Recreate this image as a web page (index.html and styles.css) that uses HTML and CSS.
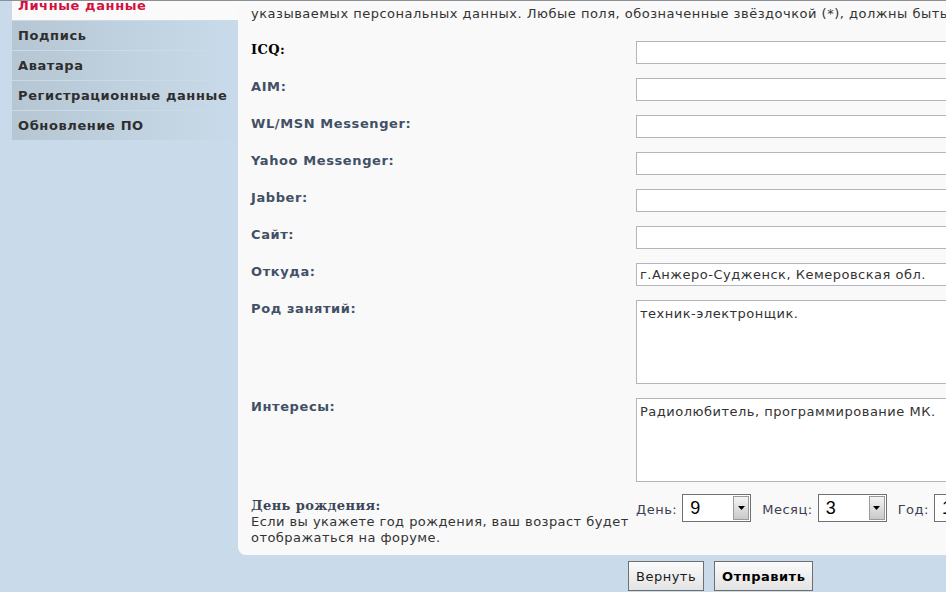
FILE: index.html
```html
<!DOCTYPE html>
<html lang="ru">
<head>
<meta charset="utf-8">
<title>Личные данные</title>
<link rel="stylesheet" href="styles.css">
</head>
<body>
<div class="page">
  <nav class="tabs">
    <div class="tab active"><span class="tab-text">Личные данные</span></div>
    <div class="tab">Подпись</div>
    <div class="tab">Аватара</div>
    <div class="tab">Регистрационные данные</div>
    <div class="tab">Обновление ПО</div>
  </nav>
  <main class="content">
    <section class="panel">
      <p class="intro">указываемых персональных данных. Любые поля, обозначенные звёздочкой (*), должны быть заполнены.</p>
      <div class="form">
        <div class="label serif black">ICQ:</div>
        <div class="field"><input class="text" type="text"></div>

        <div class="label">AIM:</div>
        <div class="field"><input class="text" type="text"></div>

        <div class="label">WL/MSN Messenger:</div>
        <div class="field"><input class="text" type="text"></div>

        <div class="label">Yahoo Messenger:</div>
        <div class="field"><input class="text" type="text"></div>

        <div class="label">Jabber:</div>
        <div class="field"><input class="text" type="text"></div>

        <div class="label">Сайт:</div>
        <div class="field"><input class="text" type="text"></div>

        <div class="label">Откуда:</div>
        <div class="field"><input class="text" type="text" value="г.Анжеро-Судженск, Кемеровская обл."></div>

        <div class="label">Род занятий:</div>
        <div class="field"><textarea class="area">техник-электронщик.</textarea></div>

        <div class="label">Интересы:</div>
        <div class="field"><textarea class="area">Радиолюбитель, программирование МК.</textarea></div>

        <div class="label birth">
          <div class="serif">День рождения:</div>
          <div class="explain">Если вы укажете год рождения, ваш возраст будет отображаться на форуме.</div>
        </div>
        <div class="field dates">
          <span class="date-label">День:</span>
          <div class="select day"><span class="value">9</span><span class="arrow"><svg width="7" height="4" viewBox="0 0 7 4"><path d="M0 0H7L3.5 4Z" fill="#000"/></svg></span></div>
          <span class="date-label">Месяц:</span>
          <div class="select month"><span class="value">3</span><span class="arrow"><svg width="7" height="4" viewBox="0 0 7 4"><path d="M0 0H7L3.5 4Z" fill="#000"/></svg></span></div>
          <span class="date-label">Год:</span>
          <div class="select year"><span class="value">1970</span><span class="arrow"><svg width="7" height="4" viewBox="0 0 7 4"><path d="M0 0H7L3.5 4Z" fill="#000"/></svg></span></div>
        </div>
      </div>
    </section>
    <div class="buttons">
      <button class="btn" type="reset">Вернуть</button>
      <button class="btn primary" type="submit">Отправить</button>
    </div>
  </main>
</div>
</body>
</html>
```

FILE: styles.css
```css
html, body {
  margin: 0;
  padding: 0;
  overflow: hidden;
}

body {
  background: #c9dbea;
  border-top: 1px solid #8e9194;
  font-family: "DejaVu Sans", Verdana, sans-serif;
  font-size: 13px;
  letter-spacing: 0.5px;
  color: #333;
}

.page {
  display: flex;
  align-items: flex-start;
  padding-left: 12px;
  width: 1300px;
}

.tabs {
  width: 226px;
  flex: none;
  display: flex;
  flex-direction: column;
  gap: 1px;
}

.tab {
  height: 29px;
  line-height: 30px;
  padding-left: 6px;
  font-weight: bold;
  letter-spacing: 0.6px;
  color: #2e2e2e;
  background: linear-gradient(to right, #b6c6d3, #c9dbea);
  white-space: nowrap;
}

.tab.active {
  height: 19px;
  line-height: 18px;
  background: #fafafa;
  color: #d31141;
  overflow: hidden;
}

.tab-text {
  display: block;
  margin-top: -4px;
}

.content {
  flex: none;
  width: 900px;
}

.panel {
  background: #f9f9f9;
  border-bottom-left-radius: 8px;
  padding: 4px 0 9px 13px;
}

.intro {
  margin: 0;
  line-height: 18px;
  white-space: nowrap;
}

.form {
  margin-top: 18px;
  display: grid;
  grid-template-columns: 385px 1fr;
  row-gap: 14px;
}

.label {
  font-weight: bold;
  letter-spacing: 0.6px;
  color: #425066;
  line-height: 18px;
}

.serif {
  font-family: "DejaVu Serif", Georgia, serif;
  font-weight: bold;
  font-size: 13px;
  letter-spacing: 0.4px;
  color: #3b4758;
}

.serif.black {
  color: #000;
}

.text {
  display: block;
  box-sizing: border-box;
  width: 420px;
  height: 23px;
  margin: 0;
  padding: 1px 3px;
  border: 1px solid #b2b6bc;
  background: #fff;
  font-family: "DejaVu Sans", Verdana, sans-serif;
  font-size: 13px;
  letter-spacing: 0.5px;
  color: #333;
  outline: none;
}

.area {
  display: block;
  box-sizing: border-box;
  width: 420px;
  height: 84px;
  margin: 0;
  padding: 5px 3px;
  border: 1px solid #b2b6bc;
  background: #fff;
  font-family: "DejaVu Sans", Verdana, sans-serif;
  font-size: 13px;
  letter-spacing: 0.5px;
  line-height: 16px;
  color: #333;
  resize: none;
  outline: none;
}

.birth {
  margin-top: -2px;
  padding-top: 4px;
  line-height: 16px;
}

.explain {
  font-weight: normal;
  letter-spacing: 0.45px;
  color: #333;
}

.dates {
  display: flex;
  align-items: center;
  height: 28px;
  margin-top: -2px;
  white-space: nowrap;
}

.date-label {
  margin-right: 5px;
  color: #3a4150;
  padding-top: 3px;
}

.select {
  box-sizing: border-box;
  height: 28px;
  width: 69px;
  border: 1px solid #707070;
  background: #fff;
  display: flex;
  align-items: stretch;
  justify-content: space-between;
  padding: 1px;
  margin-right: 11px;
  flex: none;
}

.select .value {
  font-family: "Liberation Sans", Arial, sans-serif;
  font-size: 18px;
  letter-spacing: 0;
  line-height: 24px;
  color: #000;
  padding-left: 6px;
}

.select .arrow {
  box-sizing: border-box;
  width: 16px;
  border: 1px solid #9a9a9a;
  background: linear-gradient(#f4f4f4, #c9c9c9);
  display: flex;
  align-items: center;
  justify-content: center;
}

.buttons {
  display: flex;
  gap: 10px;
  padding: 6px 0 0 390px;
}

.btn {
  box-sizing: border-box;
  height: 30px;
  margin: 0;
  padding: 0 7px;
  border: 1px solid #6f6f6f;
  background: linear-gradient(#fbfbfb, #e3e3e3);
  font-family: "DejaVu Sans", Verdana, sans-serif;
  font-size: 13px;
  letter-spacing: 0.5px;
  color: #1a1a1a;
}

.btn.primary {
  font-weight: bold;
  color: #000;
}
```
